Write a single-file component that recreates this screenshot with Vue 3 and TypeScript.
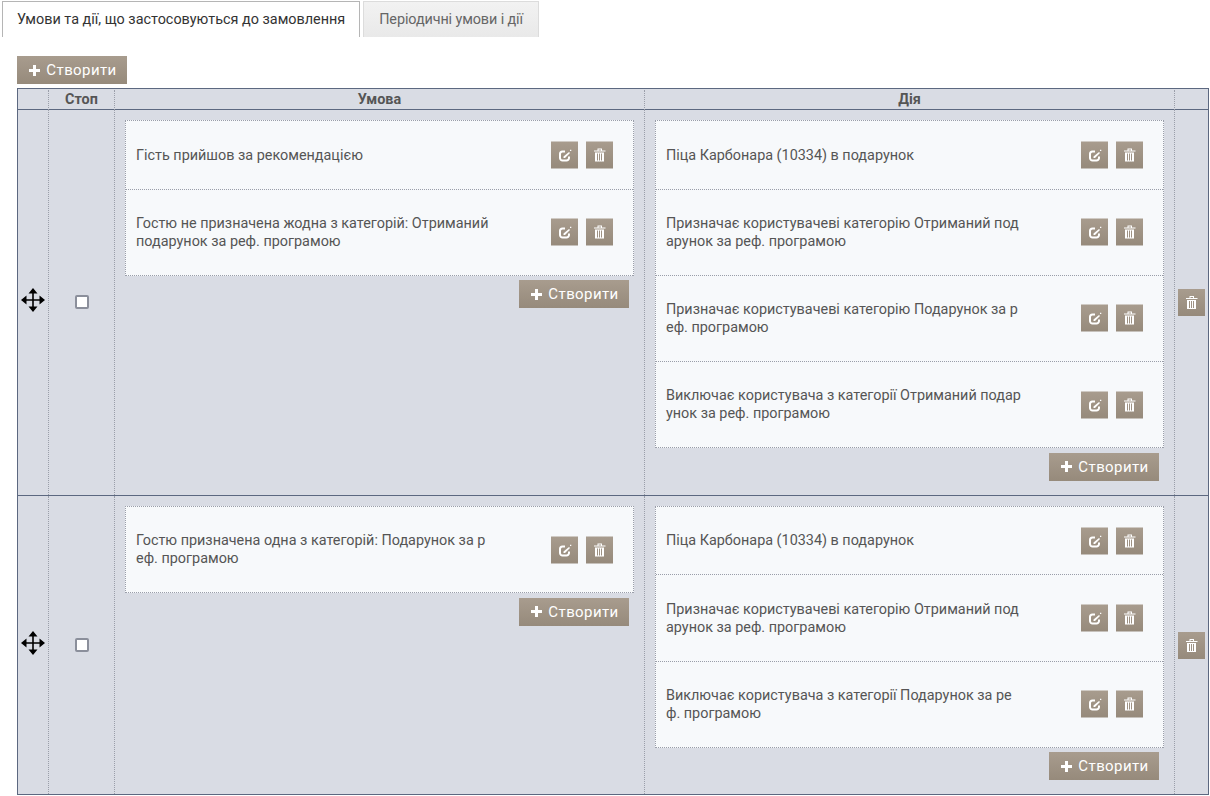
<script setup lang="ts">
interface Rule {
  conditions: string[]
  actions: string[]
}

const rules: Rule[] = [
  {
    conditions: [
      'Гість прийшов за рекомендацією',
      'Гостю не призначена жодна з категорій: Отриманий подарунок за реф. програмою',
    ],
    actions: [
      'Піца Карбонара (10334) в подарунок',
      'Призначає користувачеві категорію Отриманий подарунок за реф. програмою',
      'Призначає користувачеві категорію Подарунок за реф. програмою',
      'Виключає користувача з категорії Отриманий подарунок за реф. програмою',
    ],
  },
  {
    conditions: ['Гостю призначена одна з категорій: Подарунок за реф. програмою'],
    actions: [
      'Піца Карбонара (10334) в подарунок',
      'Призначає користувачеві категорію Отриманий подарунок за реф. програмою',
      'Виключає користувача з категорії Подарунок за реф. програмою',
    ],
  },
]
</script>

<template>
  <div class="page">
    <div class="tabs">
      <div class="tab active">Умови та дії, що застосовуються до замовлення</div>
      <div class="tab">Періодичні умови і дії</div>
    </div>

    <button class="create top" type="button">
      <svg class="plus" viewBox="0 0 11 11"><path d="M4 0h3v4h4v3H7v4H4V7H0V4h4z" /></svg>
      <span>Створити</span>
    </button>

    <div class="table">
      <div class="row head">
        <div class="cell"></div>
        <div class="cell">Стоп</div>
        <div class="cell">Умова</div>
        <div class="cell">Дія</div>
        <div class="cell"></div>
      </div>

      <div v-for="(rule, r) in rules" :key="r" class="row body">
        <div class="cell center">
          <svg class="move" viewBox="0 0 24 24">
            <path d="M12 0L16.500 5.500H12.800V11.200H18.500V7.500L24 12L18.500 16.500V12.800H12.800V18.500H16.500L12 24L7.500 18.500H11.200V12.800H5.500V16.500L0 12L5.500 7.500V11.200H11.200V5.500H7.500Z" />
          </svg>
        </div>
        <div class="cell center"><input class="check" type="checkbox" /></div>

        <div v-for="(list, k) in [rule.conditions, rule.actions]" :key="k" class="cell list">
          <div class="card">
            <div v-for="(text, i) in list" :key="i" class="item">
              <div class="text">{{ text }}</div>
              <div class="buttons">
                <button class="icon" type="button">
                  <svg viewBox="0 0 15 15">
                    <path class="stroke" d="M8 4H5.500A2.500 2.500 0 0 0 3 6.500V10.500A2.500 2.500 0 0 0 5.500 13H9.500A2.500 2.500 0 0 0 12 10.500V9" />
                    <path d="M12 4.500L13 5.500L8 10.500H6.500V9z" />
                    <path d="M13 2.300h1.300v1.300h-1.300z" />
                  </svg>
                </button>
                <button class="icon" type="button">
                  <svg viewBox="0 0 15 15">
                    <path d="M5.500 1h4.500v2H9V2H6.500v1h-1zM2 3h11.500v1H2zM3 5h9v9H3zm2 1v7h1V6zm2 0v7h1V6zm2 0v7h1V6z" fill-rule="evenodd" />
                  </svg>
                </button>
              </div>
            </div>
          </div>
          <button class="create" type="button">
            <svg class="plus" viewBox="0 0 11 11"><path d="M4 0h3v4h4v3H7v4H4V7H0V4h4z" /></svg>
            <span>Створити</span>
          </button>
        </div>

        <div class="cell center">
          <button class="icon" type="button">
            <svg viewBox="0 0 15 15">
              <path d="M5.500 1h4.500v2H9V2H6.500v1h-1zM2 3h11.500v1H2zM3 5h9v9H3zm2 1v7h1V6zm2 0v7h1V6zm2 0v7h1V6z" fill-rule="evenodd" />
            </svg>
          </button>
        </div>
      </div>
    </div>
  </div>
</template>

<style>
html,
body {
  margin: 0;
  background: #fff;
}
</style>

<style scoped>
.page {
  width: 1210px;
  height: 796px;
  box-sizing: border-box;
  padding-top: 1px;
  font-family: Roboto, "Liberation Sans", sans-serif;
  font-size: 14.4px;
  color: #555;
  overflow: hidden;
}

.tabs {
  display: flex;
  gap: 3px;
  height: 36px;
  padding-left: 2px;
}

.tab {
  box-sizing: border-box;
  height: 36px;
  padding: 0 15px;
  line-height: 35px;
  letter-spacing: -0.1px;
  border: 1px solid #dcdcdc;
  border-bottom: 0;
  background: linear-gradient(#f2f2f2, #e9e9e9);
  color: #666;
}

.tab.active {
  padding: 0 14px;
  letter-spacing: 0;
  background: #fff;
  color: #333;
  border-color: #b5b5b5;
}

button {
  border: 0;
  padding: 0;
  margin: 0;
  font: inherit;
  background: linear-gradient(#a89c8e, #968a7b);
}

.create {
  display: flex;
  align-items: center;
  justify-content: center;
  gap: 6px;
  width: 110px;
  height: 28px;
  padding-left: 2px;
  color: #fff;
  font-size: 15px;
  letter-spacing: 0.4px;
}

.create.top {
  margin: 19px 0 4px 17px;
}

.plus {
  width: 11px;
  height: 11px;
  fill: #fff;
}

.table {
  box-sizing: border-box;
  width: 1192px;
  margin-left: 17px;
  border: 1px solid #5c6880;
  background: #d9dce4;
}

.row {
  display: grid;
  grid-template-columns: 30px 66px 530px 530px 1fr;
}

.head {
  height: 19px;
  padding-top: 1px;
  line-height: 20px;
  text-align: center;
  font-weight: 700;
  color: #555;
  border-bottom: 1px solid #5c6880;
}

.body + .body {
  border-top: 1px solid #5c6880;
}

.cell {
  box-sizing: border-box;
  min-width: 0;
  border-left: 1px dotted #9a9ea9;
}

.cell:first-child {
  border-left: 0;
}

.center {
  display: flex;
  align-items: center;
  justify-content: center;
}

.list {
  display: flex;
  flex-direction: column;
  align-items: flex-end;
  padding: 10px 10px 14px;
}

.card {
  width: 100%;
  box-sizing: border-box;
  margin-top: 0.4px;
  background: #f7f9fb;
  border: 1px dotted #9a9ea9;
  border-width: 1px 1px 0;
}

.item {
  padding: 25.250px 20px 23.950px 10px;
  border-bottom: 1px dotted #9a9ea9;
  position: relative;
}

.text {
  width: 356px;
  line-height: 18px;
  word-break: break-all;
}

.buttons {
  display: flex;
  gap: 8px;
  position: absolute;
  right: 20px;
  top: 50%;
  transform: translateY(-50%);
}

.list > .create {
  margin: 4.600px 5px 0 0;
}

.icon {
  display: flex;
  align-items: center;
  justify-content: center;
  width: 27px;
  height: 27px;
}

.icon svg {
  width: 15px;
  height: 15px;
  fill: #fff;
}

.icon .stroke {
  fill: none;
  stroke: #fff;
  stroke-width: 2;
}

.move {
  width: 24px;
  height: 24px;
  fill: #000;
  margin-bottom: 5px;
}

.check {
  appearance: none;
  box-sizing: border-box;
  width: 14px;
  height: 14px;
  margin: 0;
  background: #fff;
  border: 2px solid #8b8f9b;
  border-radius: 2px;
}
</style>
